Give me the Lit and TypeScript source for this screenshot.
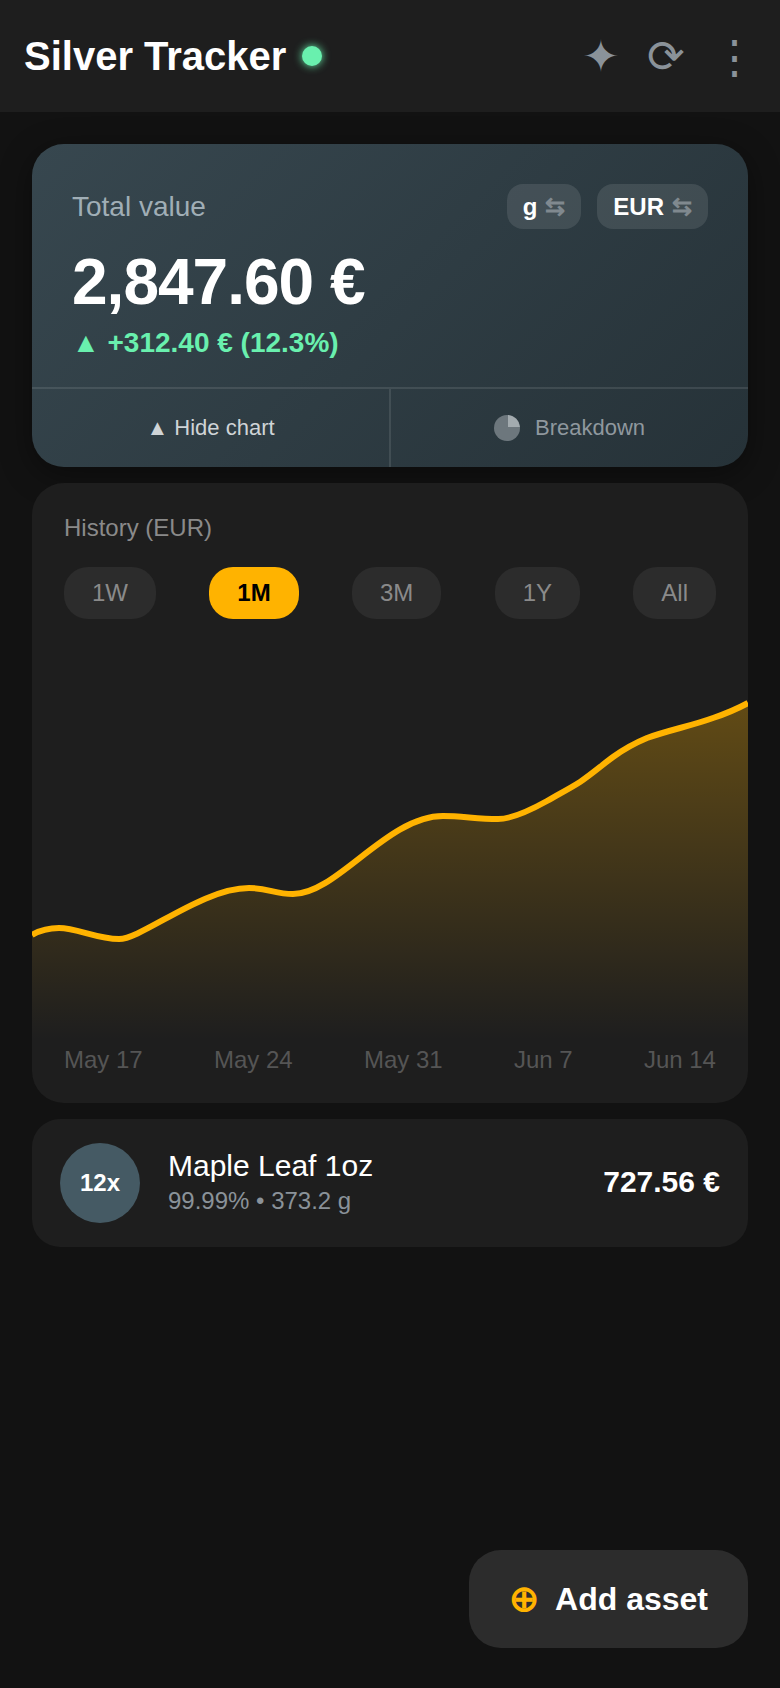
import { LitElement, html, css } from "lit";
import { customElement, state } from "lit/decorators.js";

const RANGES = ["1W", "1M", "3M", "1Y", "All"];
const DATES = ["May 17", "May 24", "May 31", "Jun 7", "Jun 14"];

// hand-fitted to the reference curve, x 0..716, y 0..400
const LINE =
  "M0,295 C10,289 18,288 27,288 C45,288 65,299 87,299 C110,299 170,248 217,248 " +
  "C236,248 243,254 261,254 C305,254 355,176 411,176 C430,176 445,179 466,179 " +
  "C480,179 497,171 515,161 C527,154 537,149 548,142 C560,134 570,125 581,117 " +
  "C592,109 603,103 615,98 C626,94 637,91 648,88 C659,85 670,82 681,78 C693,74 705,69 716,63";

@customElement("app-root")
export class AppRoot extends LitElement {
  @state() range = "1M";

  static styles = css`
    :host {
      display: block;
      position: relative;
      min-height: 1688px;
      background: #121212;
      color: #fff;
      font-family: "Liberation Sans", Arial, sans-serif;
    }

    .topbar {
      height: 112px;
      box-sizing: border-box;
      padding: 0 23px 0 24px;
      display: flex;
      align-items: center;
      justify-content: space-between;
      background: #1e1e1e;
    }
    .brand {
      display: flex;
      align-items: center;
      gap: 16px;
    }
    .brand h1 {
      margin: 0;
      font-size: 40px;
      font-weight: 700;
    }
    .dot {
      width: 20px;
      height: 20px;
      border-radius: 50%;
      background: #69f0ae;
      box-shadow: 0 0 8px #69f0ae;
    }
    .actions {
      display: flex;
      align-items: center;
      gap: 27px;
    }
    .actions button {
      padding: 0;
      border: none;
      background: none;
      color: #8a9299;
      font-family: inherit;
      font-size: 45px;
      line-height: 1;
    }

    main {
      padding: 32px 32px 0;
      display: flex;
      flex-direction: column;
      gap: 16px;
    }

    .hero {
      border-radius: 32px;
      overflow: hidden;
      background: linear-gradient(135deg, #37474f, #263238);
      box-shadow: 0 8px 32px rgba(0, 0, 0, 0.4);
    }
    .hero-body {
      padding: 40px 40px 28px;
    }
    .hero-top {
      display: flex;
      align-items: center;
      justify-content: space-between;
    }
    .hero-label {
      font-size: 28px;
      color: #a0aeb6;
    }
    .chips {
      display: flex;
      gap: 16px;
    }
    .chip {
      height: 45px;
      box-sizing: border-box;
      padding: 0 16px;
      display: flex;
      align-items: center;
      gap: 8px;
      border: none;
      border-radius: 16px;
      background: rgba(255, 255, 255, 0.1);
      color: #fff;
      font-family: inherit;
      font-size: 24px;
      font-weight: 700;
    }
    .chip span {
      color: #80898f;
    }
    .amount {
      margin-top: 16px;
      font-size: 64px;
      font-weight: 700;
      letter-spacing: -1px;
    }
    .delta {
      margin-top: 8px;
      font-size: 28px;
      font-weight: 700;
      color: #69f0ae;
    }
    .hero-foot {
      display: flex;
      height: 78px;
      border-top: 2px solid rgba(255, 255, 255, 0.1);
    }
    .hero-foot button {
      flex: 1;
      display: flex;
      align-items: center;
      justify-content: center;
      gap: 15px;
      padding: 0;
      border: none;
      background: none;
      font-family: inherit;
      font-size: 22px;
    }
    .hero-foot .toggle {
      color: #cfd4d7;
    }
    .hero-foot .split {
      color: #8f989e;
      border-left: 2px solid rgba(255, 255, 255, 0.1);
    }

    .history {
      border-radius: 32px;
      overflow: hidden;
      background: #1e1e1e;
      padding-bottom: 29px;
    }
    .history-label {
      padding: 31px 32px 0;
      font-size: 24px;
      color: #8a8a8a;
    }
    .ranges {
      display: flex;
      justify-content: space-between;
      margin: 25px 32px 0;
    }
    .ranges button {
      height: 52px;
      padding: 0 28px;
      border: none;
      border-radius: 24px;
      background: #2c2c2c;
      color: #8a8a8a;
      font-family: inherit;
      font-size: 24px;
    }
    .ranges button.on {
      background: #ffb300;
      color: #000;
      font-weight: 700;
    }
    .plot {
      display: block;
      width: 100%;
      height: 400px;
      margin-top: 21px;
    }
    .dates {
      display: flex;
      justify-content: space-between;
      padding: 6px 32px 0;
      font-size: 24px;
      color: #555;
    }

    .asset {
      display: flex;
      align-items: center;
      gap: 28px;
      padding: 24px 28px;
      border-radius: 28px;
      background: #1e1e1e;
    }
    .badge {
      width: 80px;
      height: 80px;
      flex: none;
      display: flex;
      align-items: center;
      justify-content: center;
      border-radius: 50%;
      background: #455a64;
      font-size: 24px;
      font-weight: 700;
    }
    .asset-info {
      flex: 1;
      padding-bottom: 2px;
    }
    .asset-name {
      font-size: 30px;
    }
    .asset-sub {
      margin-top: 4px;
      font-size: 24px;
      color: #8a9299;
    }
    .asset-value {
      padding-bottom: 2px;
      font-size: 30px;
      font-weight: 700;
    }

    .fab {
      position: absolute;
      right: 32px;
      bottom: 40px;
      height: 98px;
      padding: 0 40px;
      display: flex;
      align-items: center;
      gap: 16px;
      border: none;
      border-radius: 32px;
      background: #2c2c2c;
      color: #fff;
      font-family: inherit;
      font-size: 32px;
      font-weight: 700;
    }
    .fab span {
      color: #ffb300;
      font-size: 36px;
    }
  `;

  render() {
    return html`
      <header class="topbar">
        <div class="brand">
          <h1>Silver Tracker</h1>
          <div class="dot"></div>
        </div>
        <div class="actions">
          <button>✦</button>
          <button>⟳</button>
          <button>⋮</button>
        </div>
      </header>

      <main>
        <section class="hero">
          <div class="hero-body">
            <div class="hero-top">
              <div class="hero-label">Total value</div>
              <div class="chips">
                <button class="chip">g <span>⇆</span></button>
                <button class="chip">EUR <span>⇆</span></button>
              </div>
            </div>
            <div class="amount">2,847.60 €</div>
            <div class="delta">▲ +312.40 € (12.3%)</div>
          </div>
          <div class="hero-foot">
            <button class="toggle">▲ Hide chart</button>
            <button class="split">
              <svg width="26" height="26" viewBox="0 0 26 26">
                <circle cx="13" cy="13" r="13" fill="#6d777d" />
                <path d="M14 0.05 A13 13 0 0 1 25.95 12 L14 12 Z" fill="#a3abaf" />
              </svg>
              Breakdown
            </button>
          </div>
        </section>

        <section class="history">
          <div class="history-label">History (EUR)</div>
          <div class="ranges">
            ${RANGES.map(
              (r) => html`<button
                class=${r === this.range ? "on" : ""}
                @click=${() => (this.range = r)}
              >
                ${r}
              </button>`
            )}
          </div>
          <svg class="plot" viewBox="0 0 716 400" preserveAspectRatio="none">
            <defs>
              <linearGradient id="fade" x1="0" y1="0" x2="0" y2="1">
                <stop offset="0" stop-color="#ffb300" stop-opacity="0.3" />
                <stop offset="1" stop-color="#ffb300" stop-opacity="0" />
              </linearGradient>
            </defs>
            <path d="${LINE} L716,400 L0,400 Z" fill="url(#fade)" />
            <path d=${LINE} fill="none" stroke="#ffb300" stroke-width="6" />
          </svg>
          <div class="dates">${DATES.map((d) => html`<span>${d}</span>`)}</div>
        </section>

        <section class="asset">
          <div class="badge">12x</div>
          <div class="asset-info">
            <div class="asset-name">Maple Leaf 1oz</div>
            <div class="asset-sub">99.99% • 373.2 g</div>
          </div>
          <div class="asset-value">727.56 €</div>
        </section>
      </main>

      <button class="fab"><span>⊕</span> Add asset</button>
    `;
  }
}
